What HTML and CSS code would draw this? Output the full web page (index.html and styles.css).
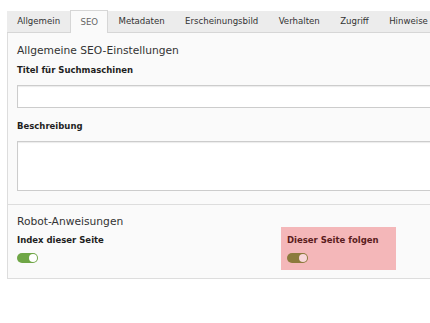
FILE: index.html
```html
<!DOCTYPE html>
<html lang="de">
<head>
<meta charset="utf-8">
<title>SEO</title>
<link rel="stylesheet" href="styles.css">
</head>
<body>
<div class="editor">
  <nav class="tabs">
    <span class="tab">Allgemein</span>
    <span class="tab tab-active">SEO</span>
    <span class="tab">Metadaten</span>
    <span class="tab">Erscheinungsbild</span>
    <span class="tab">Verhalten</span>
    <span class="tab">Zugriff</span>
    <span class="tab">Hinweise</span>
  </nav>
  <div class="panel">
    <section class="group group-first">
      <h2 class="group-title">Allgemeine SEO-Einstellungen</h2>
      <label class="field-label label-title">Titel für Suchmaschinen</label>
      <div class="input"></div>
      <label class="field-label label-desc">Beschreibung</label>
      <div class="textarea"></div>
    </section>
    <section class="group group-second">
      <h2 class="group-title title-tight">Robot-Anweisungen</h2>
      <div class="cols">
        <div class="cell">
          <div class="field-label">Index dieser Seite</div>
          <span class="toggle"></span>
        </div>
        <div class="cell cell-highlight">
          <div class="field-label">Dieser Seite folgen</div>
          <span class="toggle toggle-highlight"></span>
        </div>
      </div>
    </section>
  </div>
</div>
</body>
</html>
```
FILE: styles.css
```css
html, body {
  margin: 0;
  padding: 0;
  background: #ffffff;
  overflow: hidden;
}

body {
  font-family: "DejaVu Sans", Verdana, sans-serif;
  color: #333333;
}

.editor {
  margin: 11px 0 0 7px;
  width: 640px;
}

.tabs {
  display: flex;
  height: 21px;
  background: #ececec;
  border-bottom: 1px solid #d6d6d6;
}

.tab {
  display: block;
  padding: 0 10.2px;
  font-size: 8.6px;
  line-height: 21px;
  color: #333333;
  white-space: nowrap;
}

.tab-active {
  background: #fafafa;
  border: 1px solid #d6d6d6;
  border-bottom: none;
  margin-top: -1px;
  margin-bottom: -1px;
  padding: 0 9.2px;
  line-height: 22px;
  color: #666666;
}

.panel {
  background: #fafafa;
  border: 1px solid #dddddd;
  border-top: none;
}

.group {
  padding-left: 9px;
}

.group-first {
  padding-top: 11px;
  padding-bottom: 13px;
  border-bottom: 1px solid #dddddd;
}

.group-second {
  padding-top: 11px;
  padding-bottom: 8px;
}

.group-title {
  margin: 0;
  font-size: 10.7px;
  font-weight: normal;
  line-height: 14px;
  color: #333333;
}

.title-tight {
  line-height: 11px;
}

.field-label {
  display: block;
  font-size: 8.5px;
  font-weight: bold;
  line-height: 12px;
  color: #1f1f1f;
}

.label-title {
  margin-top: 6px;
}

.label-desc {
  margin-top: 12px;
}

.input,
.textarea {
  box-sizing: border-box;
  background: #ffffff;
  border: 1px solid #cccccc;
  box-shadow: inset 0 1px 1px rgba(0, 0, 0, 0.08);
}

.input {
  margin-top: 9px;
  height: 23px;
}

.textarea {
  margin-top: 9px;
  height: 50px;
}

.cols {
  display: grid;
  grid-template-columns: 270px 115px;
  margin-left: -6px;
}

.cell {
  padding: 7px 6px;
}

.cell-highlight {
  background: #f4b7b9;
}

.cell-highlight .field-label {
  color: #5a1c20;
}

.toggle {
  display: block;
  position: relative;
  margin-top: 7px;
  width: 21px;
  height: 10px;
  border-radius: 5px;
  background: #6fa646;
}

.toggle::after {
  content: "";
  position: absolute;
  top: 1px;
  right: 1.5px;
  width: 8px;
  height: 8px;
  border-radius: 50%;
  background: #ffffff;
}

.toggle-highlight {
  background: #8c7a3c;
}

.toggle-highlight::after {
  background: #f8d6d9;
}
```
